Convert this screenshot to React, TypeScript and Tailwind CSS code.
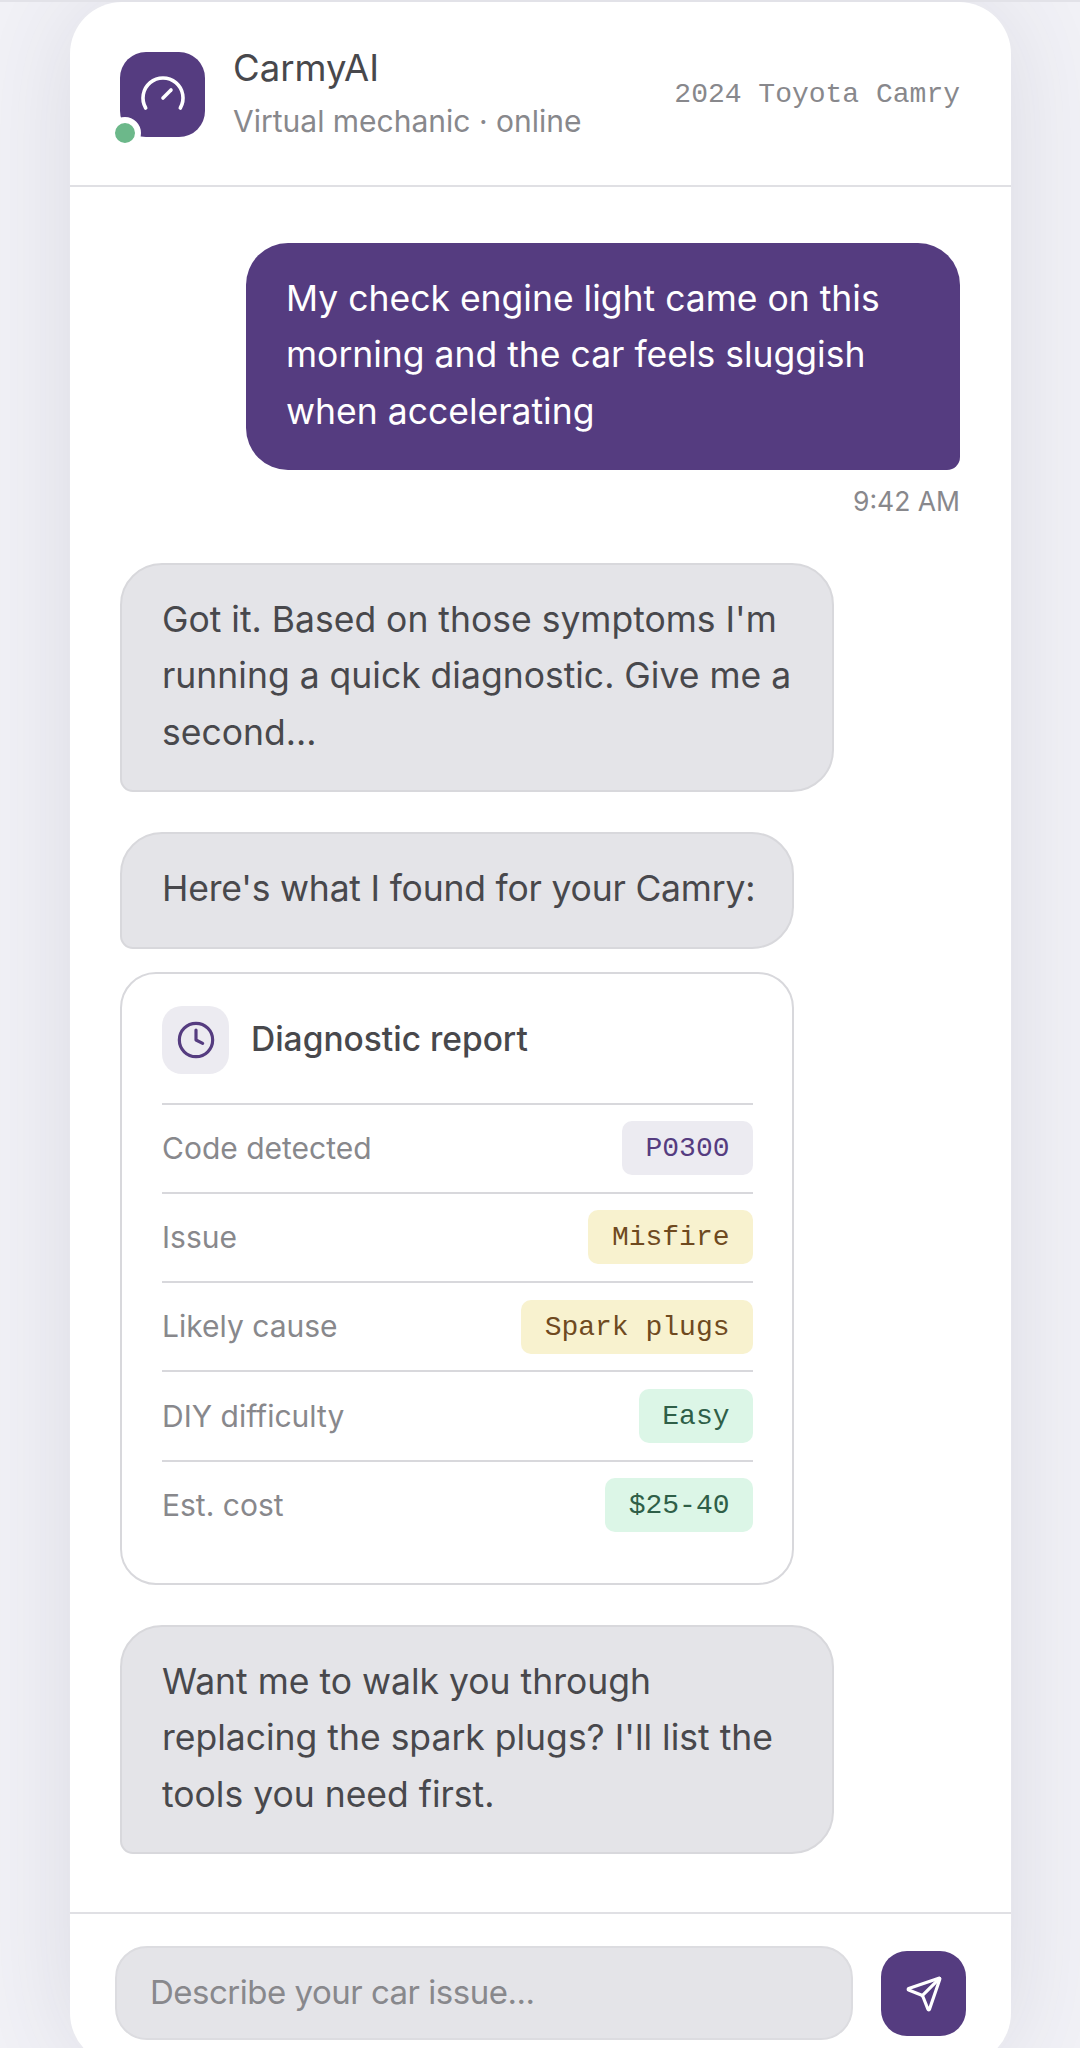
import { Clock, Gauge, Send } from "lucide-react";

const sans = "font-['Inter','Noto_Sans',sans-serif]";

function Pill({ text, tone }: { text: string; tone: string }) {
  return (
    <span
      className={`rounded-[10px] px-[23.5px] pt-[10px] pb-[8px] font-['Liberation_Mono',monospace] text-[28px] leading-[36px] ${tone}`}
    >
      {text}
    </span>
  );
}

const rows = [
  { label: "Code detected", value: "P0300", tone: "bg-[#ecebf1] text-[#553c80]" },
  { label: "Issue", value: "Misfire", tone: "bg-[#f8f2cf] text-[#6f4a1f]" },
  { label: "Likely cause", value: "Spark plugs", tone: "bg-[#f8f2cf] text-[#6f4a1f]" },
  { label: "DIY difficulty", value: "Easy", tone: "bg-[#dcf6e7] text-[#2f5f48]" },
  { label: "Est. cost", value: "$25-40", tone: "bg-[#dcf6e7] text-[#2f5f48]" },
];

function BotBubble({ children, width }: { children: React.ReactNode; width: string }) {
  return (
    <div
      className={`${width} rounded-[42px] rounded-bl-[13px] border-2 border-[#d8d8dc] bg-[#e4e4e8] px-[40px] pt-[27px] pb-[29px] text-[35.5px] leading-[56.5px] text-[#48484c]`}
    >
      {children}
    </div>
  );
}

export default function App() {
  return (
    <div className={`h-[2048px] overflow-hidden border-t-2 border-[#e2e2e8] bg-[#f2f2f7] ${sans}`}>
      <div className="ml-[70px] flex h-[2063px] w-[941px] flex-col rounded-[52px] bg-white shadow-[0_0_110px_rgba(50,50,80,0.12)]">
        <header className="flex h-[185px] items-center justify-between border-b-2 border-[#e0e0e4] pl-[50px] pr-[51px]">
          <div className="flex items-center gap-[28px]">
            <div className="relative mt-[1px] flex h-[85px] w-[85px] items-center justify-center rounded-[26px] bg-[#553c80]">
              <Gauge size={48} color="white" strokeWidth={1.8} />
              <span className="absolute bottom-[-12px] left-[-11px] h-[32px] w-[32px] rounded-full border-[6px] border-white bg-[#6cb88a]" />
            </div>
            <div className="-mt-[3px]">
              <div className="text-[36.5px] leading-[50px] text-[#48484c]">CarmyAI</div>
              <div className="mt-[8px] text-[30px] leading-[40px] text-[#88888c]">Virtual mechanic · online</div>
            </div>
          </div>
          <span className="mt-[2px] font-['Liberation_Mono',monospace] text-[28px] text-[#88888c]">2024 Toyota Camry</span>
        </header>

        <main className="flex flex-1 flex-col pr-[51px] pl-[50px] pt-[56px]">
          <div className="ml-auto w-[714px] rounded-[42px] rounded-br-[13px] bg-[#553c80] px-[40px] pt-[27.5px] pb-[29.5px] text-[35.5px] leading-[56.5px] text-white">
            My check engine light came on this morning and the car feels sluggish when accelerating
          </div>
          <div className="mt-[11px] text-right text-[26.5px] leading-[40px] text-[#88888c]">9:42 AM</div>

          <div className="mt-[42px]">
            <BotBubble width="w-[714px]">
              Got it. Based on those symptoms I'm running a quick diagnostic. Give me a second...
            </BotBubble>
          </div>
          <div className="mt-[40px]">
            <BotBubble width="w-[674px]">
              <span className="whitespace-nowrap tracking-[-0.2px]">Here's what I found for your Camry:</span>
            </BotBubble>
          </div>

          <section className="mt-[23px] w-[674px] rounded-[36px] border-2 border-[#d8d8dc] pl-[40px] pr-[39px] pt-[32px] pb-[34px]">
            <div className="flex items-center gap-[22px] pb-[29px]">
              <div className="flex h-[68px] w-[67px] items-center justify-center rounded-[20px] bg-[#ecebf1]">
                <Clock size={40} color="#553c80" strokeWidth={1.9} />
              </div>
              <div className="text-[33.5px] font-medium text-[#48484c]">Diagnostic report</div>
            </div>
            {rows.map((r) => (
              <div key={r.label} className="flex h-[89.3px] items-center justify-between border-t-2 border-[#d8d8dc]">
                <span className="text-[30px] text-[#88888c]">{r.label}</span>
                <Pill text={r.value} tone={r.tone} />
              </div>
            ))}
          </section>

          <div className="mt-[40px]">
            <BotBubble width="w-[714px]">Want me to walk you through replacing the spark plugs? I'll list the tools you need first.</BotBubble>
          </div>
        </main>

        <footer className="flex h-[153px] items-start gap-[28px] border-t-2 border-[#e0e0e4] pt-[32px] pl-[45px] pr-[45px]">
          <div className="flex h-[94px] w-[738px] items-center rounded-[32px] border-2 border-[#dcdce0] bg-[#e4e4e8] px-[33px] text-[33px] tracking-[-0.5px] text-[#88888c]">
            Describe your car issue...
          </div>
          <div className="mt-[5px] flex h-[85px] w-[85px] items-center justify-center rounded-[26px] bg-[#553c80]">
            <Send size={38} color="white" strokeWidth={2} />
          </div>
        </footer>
      </div>
    </div>
  );
}
